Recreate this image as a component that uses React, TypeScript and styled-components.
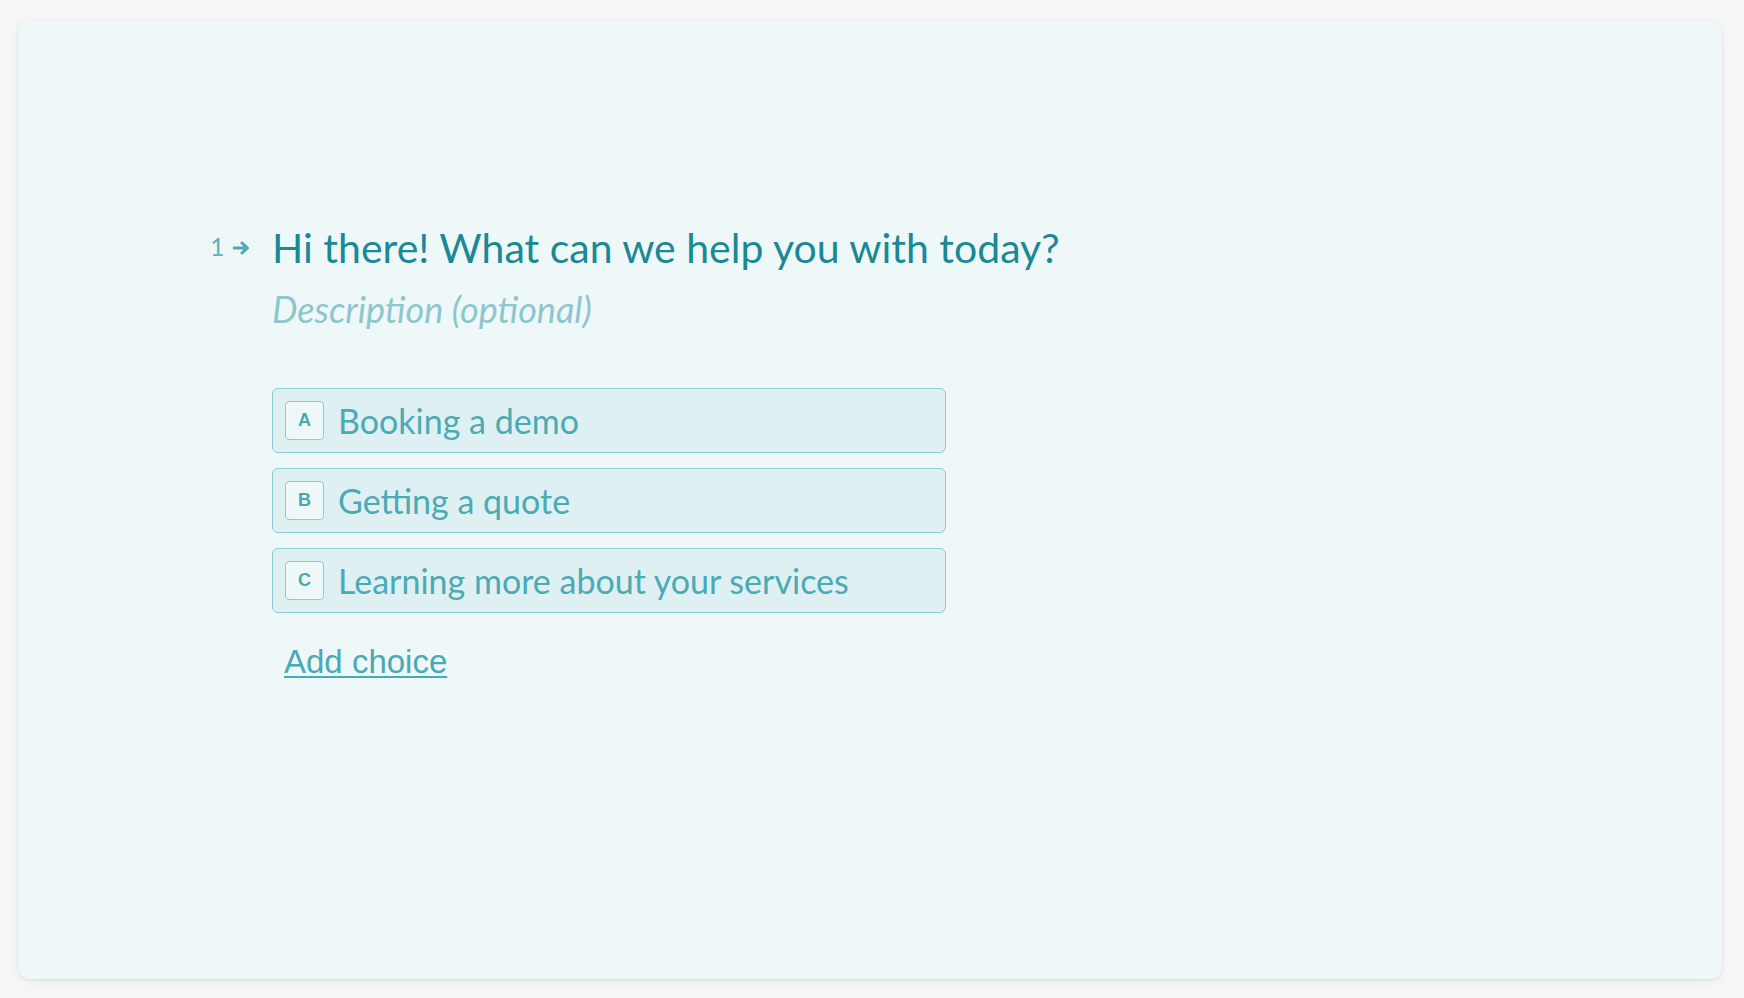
import React from "react";
import styled, { createGlobalStyle } from "styled-components";

const GlobalStyle = createGlobalStyle`
  html, body {
    margin: 0;
    padding: 0;
    background-color: #f7f7f7;
  }
  #root {
    min-height: 100vh;
  }
`;

const Page = styled.div`
  box-sizing: border-box;
  height: 998px;
  padding: 21px 22px 19px 18px;
  display: flex;
`;

const Card = styled.div`
  flex: 1;
  box-sizing: border-box;
  background-color: #eef8f9;
  border-radius: 12px;
  box-shadow: 0 1px 3px rgba(0, 0, 0, 0.08), 0 2px 12px rgba(0, 0, 0, 0.06);
  padding: 200.5px 0 0 192px;
  font-family: Lato, "Noto Sans", sans-serif;
`;

const QuestionRow = styled.div`
  display: flex;
  align-items: flex-start;
`;

const Marker = styled.div`
  width: 62px;
  flex-shrink: 0;
  padding-top: 12px;
  display: flex;
  align-items: center;
  gap: 8px;
  color: #5db2bb;
`;

const Number = styled.span`
  font-size: 25px;
  line-height: 25px;
`;

const Arrow = styled.svg`
  display: block;
  margin-top: 3px;
`;

const Body = styled.div`
  display: flex;
  flex-direction: column;
  align-items: flex-start;
`;

const Title = styled.h1`
  margin: 0;
  font-size: 41px;
  line-height: 52px;
  font-weight: 400;
  color: #1b8896;
`;

const Description = styled.div`
  margin-top: 12.5px;
  font-size: 36px;
  line-height: 46px;
  font-style: italic;
  color: #8dc6ce;
`;

const ChoiceList = styled.div`
  margin-top: 56px;
  display: flex;
  flex-direction: column;
  gap: 15px;
`;

const Choice = styled.div`
  box-sizing: border-box;
  width: 674px;
  height: 65px;
  display: flex;
  align-items: center;
  gap: 14px;
  padding-left: 12px;
  background-color: #dff0f3;
  border: 1.5px solid #8dcbd3;
  border-radius: 6px;
  color: #4aabb5;
  font-size: 34px;
`;

const Key = styled.span`
  box-sizing: border-box;
  width: 39px;
  height: 39px;
  display: flex;
  align-items: center;
  justify-content: center;
  background-color: #eef8f9;
  border: 1.5px solid #8dcbd3;
  border-radius: 4px;
  font-family: "Liberation Sans", Arial, sans-serif;
  font-weight: 700;
  font-size: 18px;
  color: #4aa7b1;
`;

const AddChoice = styled.a`
  margin: 29.5px 0 0 12px;
  font-family: "Liberation Sans", Arial, sans-serif;
  font-size: 33px;
  line-height: 38px;
  color: #4aa9b3;
  text-decoration: underline;
  text-decoration-thickness: 2px;
  text-underline-offset: 3px;
  cursor: pointer;
`;

const choices = [
  { key: "A", label: "Booking a demo" },
  { key: "B", label: "Getting a quote" },
  { key: "C", label: "Learning more about your services" },
];

export default function App() {
  return (
    <>
      <GlobalStyle />
      <Page>
        <Card>
          <QuestionRow>
            <Marker>
              <Number>1</Number>
              <Arrow width="18" height="14" viewBox="0 0 18 14">
                <path
                  d="M1 7h13M9 2l5.5 5L9 12"
                  fill="none"
                  stroke="#4aa9b3"
                  strokeWidth="3"
                  strokeLinecap="round"
                  strokeLinejoin="round"
                />
              </Arrow>
            </Marker>
            <Body>
              <Title>Hi there! What can we help you with today?</Title>
              <Description>Description (optional)</Description>
              <ChoiceList>
                {choices.map((c) => (
                  <Choice key={c.key}>
                    <Key>{c.key}</Key>
                    <span>{c.label}</span>
                  </Choice>
                ))}
              </ChoiceList>
              <AddChoice>Add choice</AddChoice>
            </Body>
          </QuestionRow>
        </Card>
      </Page>
    </>
  );
}
